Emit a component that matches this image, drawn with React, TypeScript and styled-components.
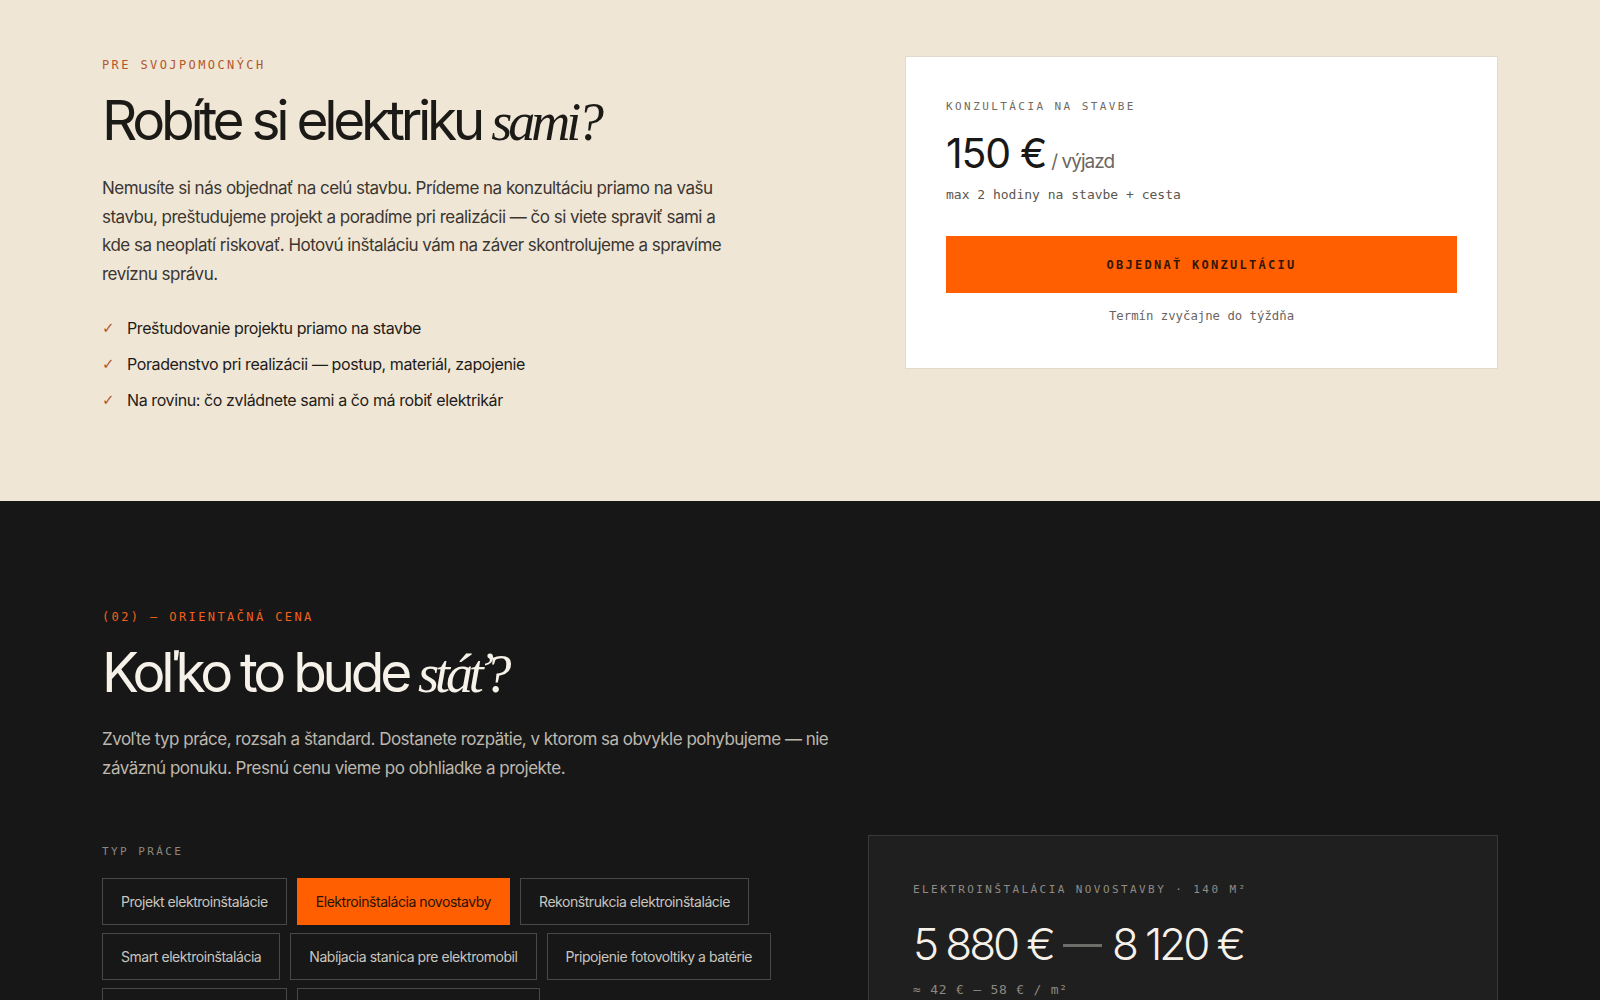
import React from "react";
import styled, { createGlobalStyle } from "styled-components";

const GlobalStyle = createGlobalStyle`
  html, body {
    margin: 0;
    padding: 0;
    background: #171717;
  }
  body {
    font-family: Inter, "Noto Sans", sans-serif;
    -webkit-font-smoothing: antialiased;
  }
  * {
    box-sizing: border-box;
  }
`;

const mono = `"DejaVu Sans Mono", "Liberation Mono", monospace`;
const serif = `"Liberation Serif", "DejaVu Serif", serif`;

const Section = styled.section<{ $dark?: boolean }>`
  background: ${p => (p.$dark ? "#171717" : "#efe6d5")};
  color: ${p => (p.$dark ? "#f4efe7" : "#1c1a17")};
  padding: ${p => (p.$dark ? "107px 0 80px" : "56px 0 89px")};
`;

const Container = styled.div`
  max-width: 1396px;
  margin: 0 auto;
`;

const TopGrid = styled.div`
  display: grid;
  grid-template-columns: 1fr 593px;
  align-items: start;
`;

const Eyebrow = styled.div<{ $bright?: boolean }>`
  font-family: ${mono};
  font-size: 12px;
  letter-spacing: 0.2em;
  text-transform: uppercase;
  color: ${p => (p.$bright ? "#f2611d" : "#b4562b")};
  line-height: 16px;
  padding-top: 1px;
`;

const Heading = styled.h2<{ $dark?: boolean }>`
  margin: 14px 0 0;
  font-family: Inter, sans-serif;
  font-weight: 400;
  font-size: 55px;
  line-height: 66px;
  letter-spacing: -0.078em;
  color: ${p => (p.$dark ? "#f6f1e9" : "#1c1a17")};

  em {
    font-family: ${serif};
    font-style: italic;
    font-weight: 400;
    font-size: 54px;
    letter-spacing: -0.075em;
    margin-left: -1px;
  }
`;

const Lead = styled.p<{ $dark?: boolean; $width: number }>`
  margin: ${p => (p.$dark ? "18px 0 0" : "19px 0 0")};
  max-width: ${p => p.$width}px;
  font-size: 17px;
  line-height: 28.6px;
  letter-spacing: -0.03em;
  color: ${p => (p.$dark ? "#bdb7ae" : "#3b3631")};
`;

const CheckList = styled.ul`
  list-style: none;
  margin: 28px 0 0;
  padding: 0;
  display: flex;
  flex-direction: column;
  gap: 12px;
`;

const CheckItem = styled.li`
  display: flex;
  align-items: center;
  gap: 13px;
  font-size: 16px;
  line-height: 24px;
  letter-spacing: -0.025em;
  color: #1f1c19;

  &::before {
    content: "✓";
    color: #b4562b;
    font-family: "DejaVu Sans", sans-serif;
    font-weight: 700;
    font-size: 15px;
    width: 12px;
  }
`;

const OfferCard = styled.div`
  background: #ffffff;
  border: 1px solid #e2dbcd;
  padding: 42px 40px 44px;
`;

const CardLabel = styled.div`
  font-family: ${mono};
  font-size: 11px;
  letter-spacing: 0.22em;
  text-transform: uppercase;
  color: #6f6a64;
  line-height: 16px;
`;

const PriceRow = styled.div`
  margin-top: 12px;
  display: flex;
  align-items: baseline;
  gap: 5px;
`;

const BigPrice = styled.span`
  font-size: 41px;
  line-height: 52px;
  letter-spacing: -0.03em;
  color: #1a1816;
`;

const PriceUnit = styled.span`
  font-size: 19px;
  letter-spacing: -0.05em;
  color: #6c6660;
`;

const CardNote = styled.div`
  margin-top: 7px;
  font-family: ${mono};
  font-size: 13px;
  line-height: 18px;
  color: #5b5650;
`;

const OrderButton = styled.button`
  display: block;
  width: 100%;
  margin-top: 32px;
  height: 57px;
  border: none;
  background: #ff5f00;
  color: #331606;
  font-family: ${mono};
  font-weight: 700;
  font-size: 12px;
  letter-spacing: 0.19em;
  text-transform: uppercase;
  cursor: pointer;
`;

const CardFoot = styled.div`
  margin-top: 15px;
  text-align: center;
  font-family: ${mono};
  font-size: 12.3px;
  line-height: 16px;
  color: #6a655f;
`;

const CalcGrid = styled.div`
  margin-top: 52px;
  display: grid;
  grid-template-columns: 1fr 630px;
  gap: 48px;
  align-items: start;
`;

const FieldLabel = styled.div`
  margin-top: 10px;
  font-family: ${mono};
  font-size: 11px;
  letter-spacing: 0.22em;
  text-transform: uppercase;
  color: #8d8880;
  line-height: 14px;
`;

const Chips = styled.div`
  margin-top: 19px;
  display: flex;
  flex-wrap: wrap;
  gap: 8px 10px;
`;

const Chip = styled.button<{ $active?: boolean }>`
  height: 47px;
  padding: 0 18px;
  border: 1px solid ${p => (p.$active ? "#ff5f00" : "#4a4846")};
  background: ${p => (p.$active ? "#ff5f00" : "transparent")};
  color: ${p => (p.$active ? "#2a1306" : "#c9c5bf")};
  font-family: Inter, sans-serif;
  font-size: 14px;
  letter-spacing: -0.032em;
  cursor: pointer;
`;

const ResultCard = styled.div`
  background: #1f1f1f;
  border: 1px solid #3a3937;
  padding: 46px 44px 48px;
`;

const ResultLabel = styled.div`
  font-family: ${mono};
  font-size: 11px;
  letter-spacing: 0.22em;
  text-transform: uppercase;
  color: #908b84;
  line-height: 16px;
`;

const RangeRow = styled.div`
  margin-top: 18px;
  display: flex;
  align-items: center;
  gap: 10px;
  font-size: 44px;
  font-weight: 300;
  line-height: 56px;
  letter-spacing: -0.07em;
  color: #f6f1e9;
`;

const RangeDash = styled.span`
  display: inline-block;
  width: 39px;
  height: 3px;
  background: #6e6c69;
  margin-top: 4px;
`;

const PerMeter = styled.div`
  margin-top: 10px;
  font-family: ${mono};
  font-size: 13px;
  letter-spacing: 0.06em;
  color: #8d8880;
`;

const workTypes = [
  "Projekt elektroinštalácie",
  "Elektroinštalácia novostavby",
  "Rekonštrukcia elektroinštalácie",
  "Smart elektroinštalácia",
  "Nabíjacia stanica pre elektromobil",
  "Pripojenie fotovoltiky a batérie",
  "Revízia elektroinštalácie",
  "Bleskozvod a uzemnenie budovy"
];

const checks = [
  "Preštudovanie projektu priamo na stavbe",
  "Poradenstvo pri realizácii — postup, materiál, zapojenie",
  "Na rovinu: čo zvládnete sami a čo má robiť elektrikár"
];

const App = () => {
  const [active, setActive] = React.useState(1);

  return (
    <>
      <GlobalStyle />
      <Section>
        <Container>
          <TopGrid>
            <div>
              <Eyebrow>Pre svojpomocných</Eyebrow>
              <Heading>
                Robíte si elektriku <em>sami?</em>
              </Heading>
              <Lead $width={632}>
                Nemusíte si nás objednať na celú stavbu. Prídeme na konzultáciu priamo na vašu stavbu,
                preštudujeme projekt a poradíme pri realizácii — čo si viete spraviť sami a kde sa neoplatí
                riskovať. Hotovú inštaláciu vám na záver skontrolujeme a spravíme revíznu správu.
              </Lead>
              <CheckList>
                {checks.map(c => (
                  <CheckItem key={c}>{c}</CheckItem>
                ))}
              </CheckList>
            </div>
            <OfferCard>
              <CardLabel>Konzultácia na stavbe</CardLabel>
              <PriceRow>
                <BigPrice>150 €</BigPrice>
                <PriceUnit>/ výjazd</PriceUnit>
              </PriceRow>
              <CardNote>max 2 hodiny na stavbe + cesta</CardNote>
              <OrderButton>Objednať konzultáciu</OrderButton>
              <CardFoot>Termín zvyčajne do týždňa</CardFoot>
            </OfferCard>
          </TopGrid>
        </Container>
      </Section>

      <Section $dark>
        <Container>
          <Eyebrow $bright>(02) — Orientačná cena</Eyebrow>
          <Heading $dark>
            Koľko to bude <em>stáť?</em>
          </Heading>
          <Lead $dark $width={745}>
            Zvoľte typ práce, rozsah a štandard. Dostanete rozpätie, v ktorom sa obvykle pohybujeme — nie
            záväznú ponuku. Presnú cenu vieme po obhliadke a projekte.
          </Lead>
          <CalcGrid>
            <div>
              <FieldLabel>Typ práce</FieldLabel>
              <Chips>
                {workTypes.map((t, i) => (
                  <Chip key={t} $active={i === active} onClick={() => setActive(i)}>
                    {t}
                  </Chip>
                ))}
              </Chips>
            </div>
            <ResultCard>
              <ResultLabel>Elektroinštalácia novostavby · 140 m²</ResultLabel>
              <RangeRow>
                <span>5 880 €</span>
                <RangeDash />
                <span>8 120 €</span>
              </RangeRow>
              <PerMeter>≈ 42 € – 58 € / m²</PerMeter>
            </ResultCard>
          </CalcGrid>
        </Container>
      </Section>
    </>
  );
};

export default App;
